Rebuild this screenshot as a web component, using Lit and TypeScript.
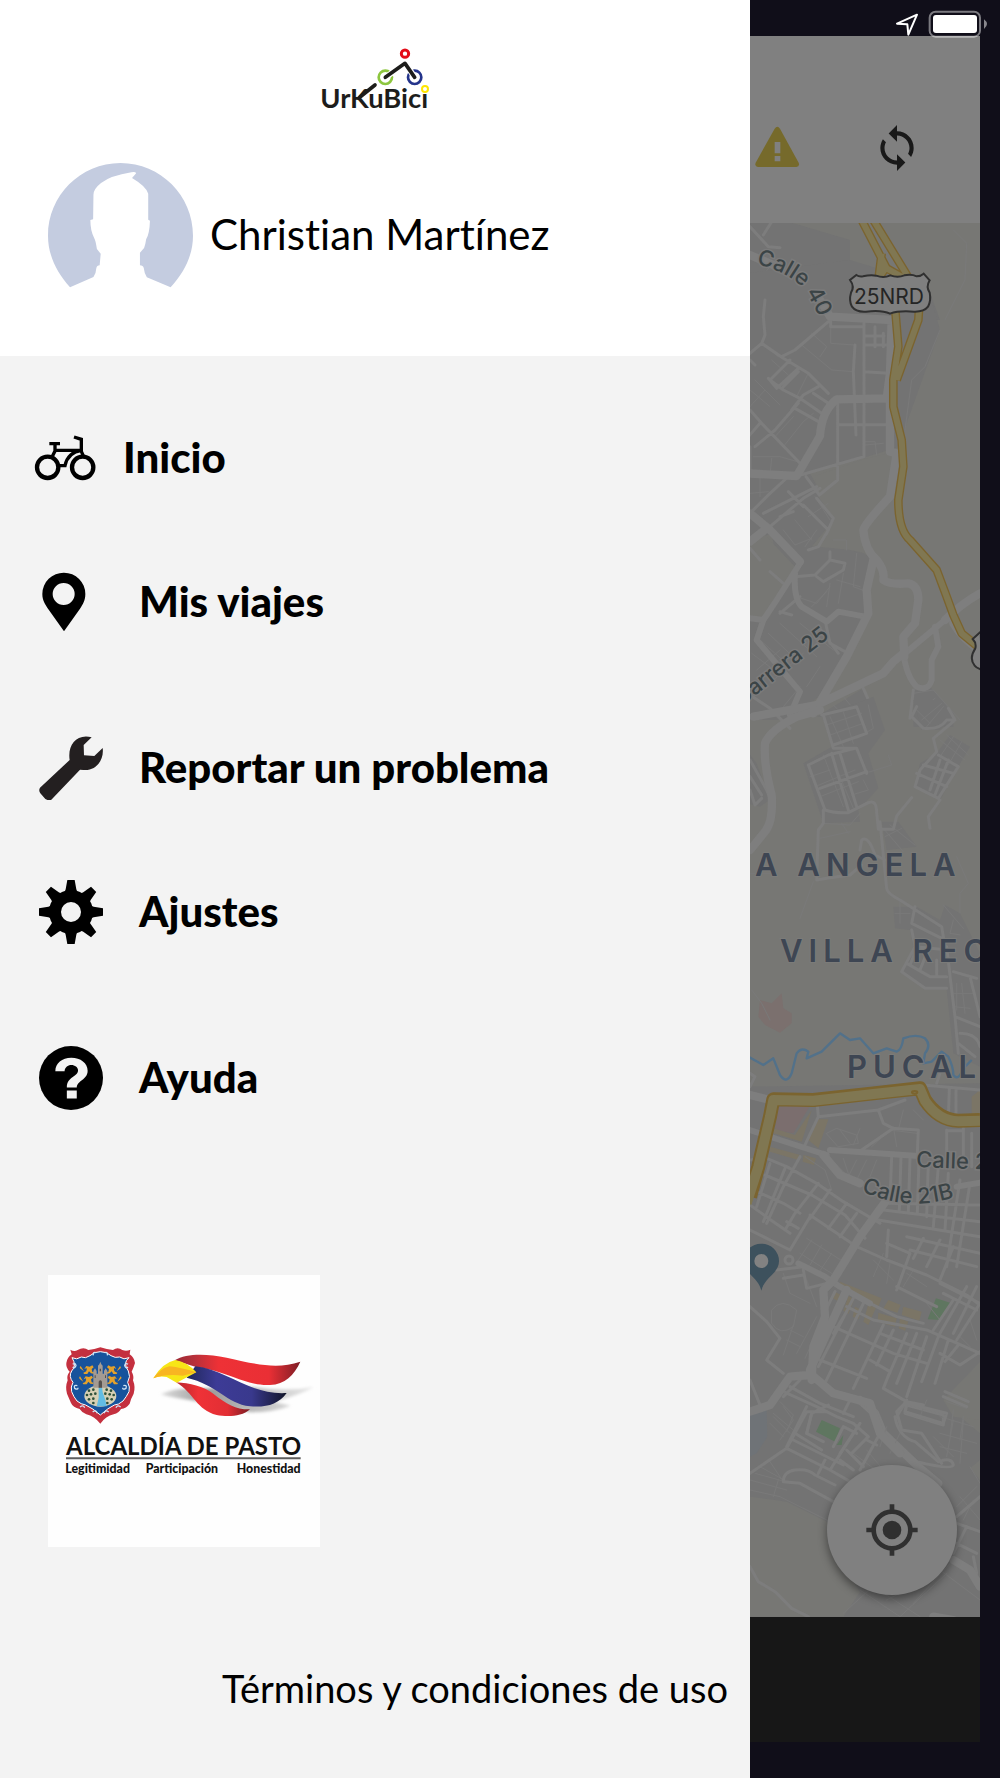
import { LitElement, html, css, svg } from "lit";
import { customElement } from "lit/decorators.js";

/* ---------- Street map: each sheet is drawn on a 3x grid ---------- */

const sheet = (y: number, content: unknown) =>
  svg`<g transform="translate(740 ${y}) scale(.33333)">${content}</g>`;

const north = svg`
  <path class="built" d="M30 640H60L330 720 330 830 560 850 600 960H0z"/>
  <path class="r1" d="M640 690l40 40-5 110-60 120M90 800l-60 70M150 885l60 50M180 850l-30 35"/>
  <path class="r2" d="M30 680l55 60 35 3M95 665L70 705M30 885h30l45 15 40-60-65-15M105 900l-40 45v20"/>
  <path class="r4" d="M30 765l70 30 110 85 55 80"/>
`;

const heights = svg`
  <path class="built" d="M20-80L330-120 560-50 600 90 500 370 480 440 380 470 210 520 285 655 215 740 300 720 390 770 390 950 320 1060 235 1190 150 1260H20V950L80 955 125 870 95 700 20 730z"/>
  <path class="land" d="M30 740L75 705 165 800 115 900 90 950 30 945z"/>
  <path class="land" d="M225 528L372 478 460 455 440 600 370 680 375 760 330 750 235 740 280 655 235 590z"/>
  <path class="built" d="M230 1250L370 1165 420 1260z M520 1170L570 1160 640 1240V1280H520z"/>
  <g class="r1">
    <path d="M65 130l50 40M185 135l90 75 65 5M215 100l45 40-20 30M272 80v50l70 5M600 90l-45 110-40 40-20 150M30 270l60 50M45 240l75 75M30 320l45-50M95 180l50 45M205 220l-35 70M130 440l60-75 30-25M100 410l45 40M160 350l-55 60M375 425h30l5 40M430 430l-55 5M40 470h80l70 20M60 530v60M95 475l-5 50M30 580l55-5M190 615l75 75M205 650l60-40M225 590l45 70M130 690l35 45 50-20M165 660l50 60M230 690l-35 50M280 720h40v30M350 760l-10 100 40 15M310 820l-15 90M290 840l70 20M170 890l60 20 40-50M270 850l-10 70M215 920l45-45M35 1060l60 45M60 1020l90 80M85 1000l95 90M120 970l110 100M50 1110l70-60M90 1150l100-90M180 970l100 80M240 1100l-40 60M130 1220l50-60M520 1180l60-10 80 90M540 1230l45-35M280 1215l60 60M310 1190l50 60"/>
  </g>
  <g class="r2">
    <path d="M75 0l-5 50 5 55-10 25L30 160M65 130l65 45 75 45 60 60M125 170l40-20 100-85M30 180l15 15M90 240l60-60M110 265l65-60M130 260l45-45M90 240l40 30 50 25 65 45M155 330l35-45 45-25M165 325l80 45M220 280l45 30M60 365l120 125M30 330l35 40M45 440l60-50 70-80M30 440v80M60 370l-35 40M110 265l-25-30M272 45v35h100M372 60v410l-190 55M405 80v60M430 100v40M372 108h60M372 135h75M345 135l-5 80 8 190M372 215l75 5M295 374h155M293 290v250l-55 45-40-55M30 640l60-60 60-55M70 640l160-80M145 575l45 45M90 680l100-85 50-30M120 650l40-15M190 615l75 75-30 50-30 10M230 595l50 60-20 45M165 830l60-5 45-45 45 10-5 20-60 35-20-15M270 780v-25M30 745l30 35M90 815l40 35M120 940l60-50M155 945l-35-10M235 980l60 80M255 960l15 70 45 25M30 1185l60 40 60 60M370 1165l20 45-100 40M520 1170l-10 85"/>
  </g>
  <g class="r3">
    <path d="M30 955l40 5-20 60 75 90 55 65-30 70M180 790l-70 110-40 60M165 820q-5 75 20 100l75 45 35-30 80 15M495 1060l60-50 60-50M585 980l10 60-20 40v60q-10 35-45 20-30-30-40-100"/>
  </g>
  <g class="r4">
    <path d="M240 0l30 50 185 10-5 160-10 75-150 3q-45 35-50 110l-70 120-150-8M450 240v215l20 5-20 130q-75 80-80 100 5 60 40 90 25 30 20 60 20 15 75 10 30 5 30 50l-10 70-35 40 3 60M30 640l60 50 90 95M30 725l50-40M400 780l-20 90 5 70-65 130-100 170M490 1060l-30 25-30 35-200 95-190 35M615 960q50-50 105-80M640 970q30 50 80 80"/>
  </g>
`;

const suburbs = svg`
  <path class="built" d="M245 40L350 10 400 -10 435 90 385 160 415 265 355 330 360 365 250 370 190 190 275 140z M525 260L540 190 590 160 630 105 690 140 655 200 600 300z M425 365L475 365 530 440 440 450z M460 620L530 620 600 660 615 615 660 640 720 760V1100L640 1060 620 870H555L485 820 520 740 510 690 465 685z M520 0H580L640 50 600 90H545z"/>
  <path class="built" d="M20 150L50 190 90 300 60 320 20 310z M20 1160L720 1150V1260H20z"/>
  <path class="hill" d="M60 900L95 910 125 880 130 925 155 940 155 970 120 998 75 975 55 950z"/>
  <g class="r1">
    <path d="M270 50l40 90M310 35l30 95M260 75l105-35M270 105l100-35M385 15l15 70-50 30M210 230l60-20M225 260l120-50M240 290l115-45M250 165l60 155M270 160l70 165M375 220l80-25-10-30M370 240l15 30-50 15M250 340v30l80 5 30-35M305 370l20 30M240 415l90-20M430 385l60 70M450 375l75 60M435 410l50-25M30 520h80M220 545l-40 110M650 470l35 80-25 30v60M465 640h45M480 600v70M610 615l60 70M640 660l-10 40 30 5M35 870l30 40 25 50M600 120l75 60M620 105l65 60M640 110l-40 60M665 125l-40 70M545 60l60-50M560 80l50-60M530 30l40 40M650 850v80M665 850l10 90M640 880h60M640 920l50 5"/>
  </g>
  <g class="r2">
    <path d="M250 45l30 100 70 0 30 75M245 45l105-25 30 80-100 35M205 195l60-30 80-20M205 195l50 135q30 10 70 8l60-30q25-10 25 30l5 50h45l10-40 45-55M240 265l140-50M275 160l50 170M300 160l50 160M250 330v40l-15 20-5 150 30-5 70-10 35-30M360 450l5-30q20-15 40 45l30 15M420 365l20 200q0 15 40 35l55 35 70 45 10 60M525 620l-10 50 90 45M530 20l-15 30 35 35q50 5 70-25l25 0-20-35M640 65l-60 50 10 40-50 55-15 50 70 35 60-95-60-35M530 220l90 40M550 195l90 25M600 180l-30 90M625 180l-40 105M600 300l-35 50 5 35M515 690l10 50-40 75 70 50h65M525 740l100 10M620 740l15 130 10 80 10 110M500 790l70 40h50M530 745l-20 50M560 760l-20 50M590 780v50M640 815l70 20M690 830l30 120M645 950l75 30M660 1000q50 0 60 40M655 1030l50 40M600 1120l-10 30M30 180l50 90 20 50M30 230l35 55M30 270l15 45 20-20M30 1120l15 10-15 30"/>
  </g>
  <path class="r4" d="M240 30l-70 20q-80 40-95 80-5 60 20 155 5 80-20 110L30 450"/>
  <path class="river" d="M25 1070l45 25 30-20 20 50q20 30 35-5l15-60q15-20 35-5l-5 20 45-20 55-55 30 20 30-5 40 45 40-15 30 10q15-5 20-40 40-15 65 0 20 20 0 45l-5 30 25-5 30-30 20 15q15 30 15 55 15 20 30-20l25-25"/>
`;

const centre = svg`
  <path class="land" d="M720 965L610 1080 640 1130 720 1140z"/>
  <path class="mall" d="M115 200L215 190 160 280 105 270z"/>
  <path class="shops" d="M215 210L185 305 100 280 100 265 165 285z M235 238H265L235 325 205 300z M90 320L180 345 175 360 90 335z M190 345L228 355 222 375 188 365z M300 725L425 775 415 800 300 740z M430 805L445 780 482 795 472 818z M490 800L545 815 538 842 485 825z M415 818L470 835 465 860 413 845z M325 768L343 778 325 822 310 812z M385 793L408 803 385 855 370 845z M285 755L302 765 292 782 278 775z M345 800L365 810 355 838 338 830z M480 835L505 845 495 872 476 865z M695 170L720 150V250L695 235z"/>
  <path class="park" d="M588 775L635 790 600 840 563 838z M245 1140L300 1165 285 1205 228 1175z M310 1185L290 1215H305z"/>
  <path class="water" d="M30 1125L80 1110 82 1190 50 1240 30 1250z"/>
  <g class="r1">
    <path d="M260 280l30-15 60 20 5 25-60 10zM300 270l30 40M360 265l-20 50M395 320l55-50 80 10M460 260l10 60M490 210l-15 60M520 210l30 30M285 370l40 40M310 355l20 60M350 360l-30 60M380 360l-30 60M410 360l-20 50M195 350l60 40 20 60M200 595l110 70M180 640l95 60M215 600l-40 60M245 615l-35 60M275 640l-40 60M400 660l60 60M430 640l-30 70M450 670l-10 60M500 700l60 40M520 690l-30 50M560 790l40 50M95 810q30-40 75 0l-10 50q-40 30-65-10zM130 700l20 60 60 30M200 720l30 80M150 870l40 20M140 900l40 20M170 940l60-110M195 955l55-120M160 855l-30 90M620 1085l60 20M600 1130l100 30M640 1110l-10 80M670 1130l-10 70M580 1190l60 60M120 1085l40 40-20 50M100 1120l60 50M90 1150l40 40M690 840l20 60M660 890l30 30M560 1080l-20 50M440 1160l-20 60M480 1180l-30 60"/>
  </g>
  <g class="r2">
    <path d="M230 170l5 60-45 95M235 230l180-20 80-30M415 210l15 40 30 15-95 65M455 265l80 5-3 70M550 135l170 15M628 145l-3 90M648 145v90M620 270v60M670 265v80M620 272h50M695 280v100M455 350l-5 130M483 350l-5 160M510 355l-5 160M537 360l-5 160M565 370l-5 160M595 380l-15 180M625 400l-10 170M660 420l-40 260M690 430l-40 250M440 490l280 5M430 510l290 35M415 540l305 50M445 570l-5 80M500 590l220 50M510 630l200 50M440 610l70 30-40 110M550 595l-30 60M600 600l-40 80M640 620l-40 100"/>
    <path d="M80 355l60 25 90 50 80 55 110 65M75 405l140 60 100 60 60 70M40 450l90 40 50 30M30 495l70 50 50 35M90 370l-40 130M135 385l-65 160M180 350l-50 90-50 110M235 430l-70 90-30 50M270 450l-60 85M320 490l-55 75M350 520l-50 70M210 525l140 95 90 40 120 45 120 60 40 30M150 630l60-100M140 545l35 20M30 570l120 60M30 360l50-5M110 690l80-10 60 30M130 715l60-10M190 690l10 55 60-15M30 800l50 45 40 50-40 65 50 40M260 805l25-50M345 765l-110 215M375 780l-125 260M320 815l-40 65M390 790l80 40 80 20M320 800l80 40 160 30M280 860l180 80 100 30M430 855l-90 190M460 870l-50 105M500 880l-60 140M530 880l-60 150M560 890l-60 180M595 890l-50 135M625 900l-40 130M655 915l-40 50M420 880l130 50M600 940l60 35 60-40M560 870l160 70M470 740l120 60M600 730l120 60M610 760l100 50M640 780l-60 90M680 740l-80 140M710 740l-70 140M720 790l-70 110M240 960l140 55M390 960l60 35-20 50 70 40 50 10M500 1090l120 30-10 30-115-35zM500 1085l-30 30 15 55 60 10 60 90M615 1055l70 30M610 1070l70 30M30 1020l30 75M130 1055l100 45 60 30 50 20 45 40M150 1040l90 50 100 40M200 1100l-60 120M215 1120l-15 60 50 25M360 1150l-60 90M385 1190l-50 50M330 1080l-20 40M165 1180l80 50M280 1220l30-60 40 20M180 1020l-50 50"/>
    <circle cx="147" cy="660" r="12"/>
  </g>
  <g class="r3">
    <path d="M270 330l265 18M30 270l90 30 140 45M175 670l80 40 45 30 90 50M650 440l70-12"/>
  </g>
  <g class="r4">
    <path d="M30 165l60 15M250 345l50 60 60 25M440 480l-80 110-80 130-30 30 5 80-35 90-5 100M320 750l-110 240M30 1115l60-20 60-85 60-5M210 1000l70 60 110 30 30 90 60 60"/>
  </g>
  <path class="edge" stroke-width="42" d="M30 470l25-90 35-150 10-52 120 2 180-20 140-15 15 35q40 60 100 62l65-2"/>
  <path class="gold" stroke-width="30" d="M20 490l35-110 35-150 10-50 120 2 180-20 140-15 15 35q40 60 100 62l65-2"/>
  <ellipse class="edge" cx="524" cy="157" rx="8" ry="4" stroke-width="6"/>
`;

const south = svg`
  <path class="land" d="M30 290L140 305 270 370 300 480 360 575 310 650H30z M620 20L720 -20V100L660 50z M690 205L720 180V240z"/>
  <g class="r1">
    <path d="M30 240l110 30M45 220l110 30M100 290l15-50M30 270l90 20 150 75M60 200l90 50M90 185l40 60M640 60l-20 110M670 60l-10 130M600 100l110 30M600 140l80 20M690 200l30 50M660 290l60 70M650 320l60-60M700 300l-30 60M360 570l120 80M400 560l140 90M310 640l110-100M480 650l140-130M600 510l120 90M640 480l-120 130M440 600l100-50M130 20l30 40-40 60M100 50l50 50M340 160l80 60M380 150l50 60"/>
  </g>
  <g class="r2">
    <path d="M30 220l110-75 60-110 60 0M140 145l130 65 70 40M160 120l150 75M200 100l15-60 50-25M235 220l20-40M130 245q0-30 35-35 40-5 60 15l60 30M130 245l50 5 100 55M270 210l35-55 45-70M300 180l40 30M320 150l50 50M360 210l60-110M380 120l30 15M465 50q10 60 60 75l70 60q40-15 45 10-5 15-110-10M500 0l-30 50M495 40l115 35 0-30-110-30zM30 500l25 45 50 30 50 50 50 25M650 370l70 25M680 380l-40 80M650 430l60 30M700 470l10 50M650 350l70-60"/>
  </g>
  <path class="r4" d="M360 0l45 40 25 60 105 100 60 50M640 480l50 30 30 50M580 650l60 10"/>
`;

const cityMap = svg`
  <svg class="canvas" viewBox="750 223 230 1394" preserveAspectRatio="xMinYMin slice" role="img" aria-label="Mapa">
    <rect class="ground" x="700" y="200" width="1500" height="1500"/>
    <rect class="blocks" x="740" y="1100" width="1500" height="520"/>
    ${sheet(0, north)} ${sheet(300, heights)} ${sheet(700, suburbs)} ${sheet(1400, south)} ${sheet(1040, centre)}
    ${sheet(300, svg`
      <path class="edge" stroke-width="26" d="M365-240L440-95 520-50M400-240L510-60 540-20 535 60 470 240M440-100L385-20M425-140L415-60 350-20M465 20L475 140 460 240 460 320 485 420 490 500 475 600Q475 690 510 720L590 810 620 890 640 945 665 1000 720 1045"/>
      <path class="gold" stroke-width="18" d="M365-240L440-95 520-50M400-240L510-60 540-20 535 60 470 240M440-100L385-20M425-140L415-60 350-20M465 20L475 140 460 240 460 320 485 420 490 500 475 600Q475 690 510 720L590 810 620 890 640 945 665 1000 720 1045"/>
      <path class="shield" transform="translate(0 98)" d="M349-173q8 6 20 4 22-5 40-2 22 8 42-1 22 8 42 0 22-4 37 3 12 0 21-8l18 20q-12 20 0 37 5 24-5 42-12 16-42 15-45-4-72 6-25-12-72-6-30 2-42-15-10-18-3-42 12-18-3-38z"/>
      <path class="shield" d="M722 995l-24 22q12 12 8 28-20 30-2 52 6 8 22 12z"/>
    `)}
    <path id="calle40" fill="none" d="M756 264Q786 271 803 288 812 300 822 324"/>
    <path id="calle21b" fill="none" d="M861 1191Q894 1206 928 1203 950 1200 975 1191"/>
    <text class="street"><textPath href="#calle40">Calle 40</textPath></text>
    <text class="street"><textPath href="#calle21b">Calle 21B</textPath></text>
    <text class="street" transform="translate(916 1167) rotate(2)">Calle 2</text>
    <text class="street" text-anchor="end" transform="translate(830 637) rotate(-38)">Carrera 25</text>
    <text class="route" x="889" y="304" text-anchor="middle">25NRD</text>
    <text class="district" x="755" y="876">A ANGELA</text>
    <text class="district" x="780" y="962">VILLA REC</text>
    <text class="district" x="847" y="1078">PUCAL</text>
    ${sheet(1040, svg`
      <path fill="#3d515d" d="M64 611a52 52 0 0 1 53 53c0 36-44 48-53 88-9-40-53-52-53-88a52 52 0 0 1 53-53z"/>
      <circle cx="64" cy="663" r="21" fill="#828282"/>
    `)}
  </svg>`;

/* ---------- Logos ---------- */

const brandLogo = svg`
  <svg class="brand" viewBox="0 0 330 204" role="img" aria-label="UrKuBici">
    <g fill="none" stroke-linecap="round" stroke-linejoin="round">
      <circle cx="255" cy="38" r="11" stroke="#e30c18" stroke-width="9"/>
      <circle cx="196" cy="109" r="20" stroke="#8dc63f" stroke-width="8"/>
      <circle cx="284" cy="109" r="20" stroke="#24348b" stroke-width="8"/>
      <path stroke="#fff" stroke-width="18" d="M205 103l50-36 24 34"/>
      <path stroke="#1d1d1b" stroke-width="11" d="M196 109l59-42 29 42M120 168l45-36"/>
    </g>
    <text class="brand-name" x="1" y="201">UrKuBici</text>
    <circle cx="315" cy="144" r="9" fill="#fff" stroke="#ffe600" stroke-width="6"/>
  </svg>`;

const lion = svg`<path d="M0 22q12-2 10-14l-7 3 6-9 10 2 8-4 4 6-6 5 2 9 6 1-2 4-8-1-6-6-5 8H2zM-8 2q-6 6 2 10l8 6" fill="#e3a12c"/>`;

const cityLogo = svg`
  <svg class="city" viewBox="24 44 816 816" role="img" aria-label="Alcaldía de Pasto">
    <defs>
      <linearGradient id="wing-top"><stop offset="0" stop-color="#9c2a33"/><stop offset=".15" stop-color="#b5303a"/><stop offset=".35" stop-color="#ee3136"/><stop offset=".75" stop-color="#ea2f35"/><stop offset="1" stop-color="#7e1d25"/></linearGradient>
      <linearGradient id="wing-mid"><stop offset="0" stop-color="#20285c"/><stop offset=".3" stop-color="#3d3b96"/><stop offset=".65" stop-color="#39398d"/><stop offset="1" stop-color="#101427"/></linearGradient>
      <linearGradient id="wing-low"><stop offset="0" stop-color="#b8262d"/><stop offset=".3" stop-color="#ef3237"/><stop offset=".7" stop-color="#e22e34"/><stop offset="1" stop-color="#7a1b22"/></linearGradient>
      <linearGradient id="shade"><stop offset="0" stop-color="#ddd"/><stop offset=".3" stop-color="#999"/><stop offset="1" stop-color="#e8e8e8"/></linearGradient>
      <filter id="soft"><feGaussianBlur stdDeviation="4"/></filter>
    </defs>
    <g stroke-linejoin="round">
      <path fill="#c4303f" d="M91 268q12 8 22 1 18-10 32 0 18-1 36-8 20 6 38 8 14-10 28 0 12 5 24-1l-2 14q14 10 16 26-4 14-10 26 8 14 4 26 8 20 2 40-8 14-12 30-10 14-26 16-6 12-22 16-24 6-40 28-18-22-42-28-14-6-20-16-20-4-26-18-6-14-12-28-6-20 2-40-4-14 6-26-12-12-10-26 2-16 16-26z"/>
      <path fill="#17539c" stroke="#fff" stroke-width="3" d="M96 292q14 8 28-2 12 6 26-4 12-12 31-12 20 0 32 12 12 8 26 4 12 10 28 2-20 16-2 40 8 16-2 34 8 14 4 28-8 16-18 28-14 12-26 12-18 8-42 30-22-20-44-30-14-2-26-12-10-12-16-28-4-14 4-28-14-18-4-34 16-16 1-40z"/>
      <g fill="none" stroke="#cfe3f5" stroke-width="4">
        <path d="M160 285q-2-12 8-8M202 285q2-12-8-8M98 312q8-6 10 4-3 10-10 4M264 312q-8-6-10 4 3 10 10 4M112 376q-12-4-8 8 10 6 10-2M250 376q12-4 8 8-10 6-10-2M120 440q10-8 14 2M242 440q-10-8-14 2M158 455q10-8 14 4M206 455q-10-8-14 4"/>
      </g>
      <g transform="translate(130 315)">${lion}</g>
      <g transform="translate(128 346)">${lion}</g>
      <g transform="translate(232 315) scale(-1 1)">${lion}</g>
      <g transform="translate(234 346) scale(-1 1)">${lion}</g>
      <ellipse cx="181" cy="407" rx="48" ry="32" fill="#d6d0b4"/>
      <g fill="#2c5039">
        <circle cx="147" cy="391" r="4"/><circle cx="160" cy="388" r="4"/><circle cx="141" cy="404" r="4"/><circle cx="153" cy="402" r="4"/><circle cx="166" cy="400" r="4"/><circle cx="147" cy="417" r="4"/><circle cx="160" cy="415" r="4"/><circle cx="160" cy="428" r="4"/>
        <circle cx="200" cy="388" r="4"/><circle cx="213" cy="391" r="4"/><circle cx="196" cy="400" r="4"/><circle cx="209" cy="402" r="4"/><circle cx="221" cy="404" r="4"/><circle cx="202" cy="415" r="4"/><circle cx="215" cy="417" r="4"/><circle cx="202" cy="428" r="4"/>
      </g>
      <path fill="#62bde4" d="M176 378h10l2 18 8 22 4 20H170l6-26z"/>
      <path fill="#a39b93" d="M160 382v-50l5-8 5 8v8h4v-24l4-4 3-8 3 8 4 4v24h4v-8l5-8 5 8v50z"/>
      <path fill="#55504e" d="M176 382v-18q5-8 10 0v18zM164 345h3v8h-3zM195 345h3v8h-3zM179 325h4v8h-4z"/>
    </g>
    <path filter="url(#soft)" fill="url(#shade)" d="M362 402Q400 385 440 386L640 380Q740 395 822 380 770 408 700 424L752 436Q700 456 630 456L480 424Q400 414 362 402z"/>
    <path fill="url(#wing-top)" d="M404 300C440 278 500 280 560 292 650 312 710 328 781 304 762 345 735 372 690 374 620 378 570 335 468 320z"/>
    <path fill="url(#wing-mid)" d="M466 318C560 328 630 405 740 398 715 432 680 442 630 438 560 430 530 372 440 352z"/>
    <path fill="url(#wing-low)" d="M408 366C450 368 490 378 520 400 560 432 590 448 630 447 605 470 560 470 530 464 470 450 462 398 408 366z"/>
    <path fill="#f7e617" d="M340 354Q366 308 406 299 440 304 469 336L410 367 380 350Q354 346 340 354z"/>
    <path fill="#f8b522" d="M340 354Q360 325 388 318 425 322 469 336L428 346Q380 340 340 354z"/>
    <text class="city-name" x="78" y="585">ALCALDÍA DE PASTO</text>
    <path fill="#5d5d5d" d="M78 591h704v6H78z"/>
    <text class="motto" x="76" y="638">Legitimidad</text>
    <text class="motto" x="317" y="638">Participación</text>
    <text class="motto" x="782" y="638" text-anchor="end">Honestidad</text>
  </svg>`;

const avatar = svg`
  <svg class="avatar" viewBox="0 0 145 145" role="img" aria-label="Foto de perfil">
    <g transform="scale(.3444 .3333) translate(-53 -38)">
      <path fill="#c4cce0" d="M117 411C78 366 53 314 53 256 53 136 147 38 263.500 38S474 136 474 256C474 314 449 366 409 411L340 381q-7-10-9-28-2-8-11-8V307l12-14q4-10 6-26 10-18 11-56l-5-3V130q-6-22-47-47l12-14q-2-6-14-3-60 10-88 32-22 18-22 35l-1 74-8 2q0 32 11 54 4 6 8 33l11 14-3 35q-8 0-10 10 0 12-8 25z"/>
    </g>
  </svg>`;

/* ---------- Menu icons ---------- */

const bike = svg`
  <svg class="icon wide" viewBox="40 75 190 144" aria-hidden="true">
    <g fill="none" stroke="#000">
      <circle cx="83" cy="175" r="32" stroke-width="13"/>
      <circle cx="188" cy="175" r="32" stroke-width="13"/>
      <path stroke-width="10" d="M88 104h32M105 104v22l-9 18M104 124h82M162 84l22 7v36l8 18M118 170h17q8-40 50-46"/>
    </g>
  </svg>`;

const pin = svg`
  <svg class="icon pin" viewBox="67 487 132 178" aria-hidden="true">
    <path fill-rule="evenodd" d="M133 488a64 64 0 0 1 64 64c0 20-8 32-16 44l-48 68-48-68c-8-12-17-24-17-44a64 64 0 0 1 65-64zm-1 31a33 33 0 1 0 0 66 33 33 0 0 0 0-66z"/>
  </svg>`;

const wrench = svg`
  <svg class="icon" viewBox="0 0 192 192" aria-hidden="true">
    <path fill="#231f20" d="M158 4l-24 23 1 31 31 2 25-24c5 38-22 70-58 66l-10-1-86 90q-9 4-18-2L4 172q-6-9-1-17L92 72C85 28 112-8 158 4z"/>
  </svg>`;

const toothAngles = [0, 45, 90, 135, 180, 225, 270, 315];
const gear = svg`
  <svg class="icon" viewBox="-96 -96 192 192" aria-hidden="true">
    <path fill-rule="evenodd" d="M0-66A66 66 0 1 1 0 66 66 66 0 1 1 0-66zM0-30A30 30 0 1 0 0 30 30 30 0 1 0 0-30z"/>
    ${toothAngles.map((a) => svg`<path transform="rotate(${a})" d="M-22-58q5-4 6-10l5-28h22l5 28q1 6 6 10z"/>`)}
  </svg>`;

const help = svg`
  <svg class="icon" viewBox="2 2 20 20" aria-hidden="true">
    <circle cx="12" cy="12" r="10"/>
    <path fill="#f3f3f3" d="M7.100 9.900C7.100 7.400 9.200 5.700 12.100 5.700S17.200 7.400 17.200 9.700C17.200 12.600 13.800 12.700 13.800 15H10.700C10.700 11.500 14.200 11.700 14.200 9.600 14.200 8.600 13.200 7.900 12.100 7.900S10 8.700 10 9.900zM10.700 15.900h3.100v2.500h-3.100z"/>
  </svg>`;

interface Entry { label: string; icon: unknown; tight?: boolean }

const menu: Entry[][] = [
  [{ label: "Inicio", icon: bike, tight: true }, { label: "Mis viajes", icon: pin }],
  [{ label: "Reportar un problema", icon: wrench }, { label: "Ajustes", icon: gear }],
  [{ label: "Ayuda", icon: help }],
];

@customElement("side-drawer")
class SideDrawer extends LitElement {
  static styles = css`
    :host { display: flex; flex-direction: column; background: #f3f3f3; color: #000; font-family: Lato, "Open Sans", sans-serif; font-variant-ligatures: none; }
    .head { background: #fff; min-height: 356px; box-sizing: border-box; padding-top: 41px; }
    .brand { display: block; width: 110px; height: 68px; margin: 0 auto; overflow: visible; }
    .brand-name { font: 700 82px Lato, sans-serif; fill: #1d1d1b; }
    .user { display: flex; align-items: center; gap: 17px; padding: 54px 0 0 48px; }
    .avatar { width: 145px; height: 145px; flex: none; }
    .user-name { margin: 0; padding-bottom: 4px; font-size: 42px; line-height: 50px; font-weight: 400; }
    nav { display: flex; flex-direction: column; gap: 22px; padding: 30px 0 0 33px; }
    ul { list-style: none; margin: 0; padding: 0; }
    .entry { display: flex; align-items: center; gap: 36px; height: 144px; color: inherit; text-decoration: none; font-size: 42px; line-height: 48px; font-weight: 900; }
    .entry.tight { gap: 26px; }
    .entry span { padding-bottom: 2px; }
    .icon { width: 64px; height: 64px; flex: none; margin-left: 6px; }
    .icon.wide { height: 48px; margin-left: 0; }
    .icon.pin { width: 44px; height: 60px; margin: 0 17px 0 9px; }
    .city { display: block; width: 272px; height: 272px; margin: 125px 0 0 48px; background: #fefefe; }
    .city-name { font: 700 72px Lato, sans-serif; fill: #111; }
    .motto { font: 900 37px Lato, sans-serif; fill: #111; }
    .terms { margin: auto 22px 66px auto; color: inherit; text-decoration: none; font-size: 38px; line-height: 48px; }
  `;

  render() {
    return html`
      <header class="head">
        ${brandLogo}
        <div class="user">${avatar}<p class="user-name">Christian Martínez</p></div>
      </header>
      <nav>
        ${menu.map((group) => html`<ul>
          ${group.map((e) => html`<li><a class="entry ${e.tight ? "tight" : ""}" href="#">${e.icon}<span>${e.label}</span></a></li>`)}
        </ul>`)}
      </nav>
      ${cityLogo}
      <a class="terms" href="#">Términos y condiciones de uso</a>
    `;
  }
}

@customElement("map-screen")
class MapScreen extends LitElement {
  static styles = css`
    :host { display: flex; flex-direction: column; }
    button { border: 0; padding: 0; background: none; display: flex; }
    .bar { display: flex; align-items: center; gap: 71px; box-sizing: border-box; height: 187px; padding: 37px 0 0 3px; background: #808080; }
    .warn { width: 48px; height: 48px; }
    .sync { width: 50px; height: 50px; }
    .map { position: relative; flex: 1; overflow: hidden; }
    .canvas { position: absolute; inset: 0; width: 100%; height: 100%; }
    .ground, .land { fill: #777774; }
    .blocks, .built { fill: #737373; }
    .r1, .r2, .r3, .r4 { fill: none; stroke: #7e7e7e; stroke-linejoin: round; stroke-linecap: round; }
    .r1 { stroke: #797979; stroke-width: 3; }
    .r2 { stroke: #7d7d7d; stroke-width: 9; }
    .r3 { stroke-width: 18; }
    .r4 { stroke-width: 25; }
    .edge { fill: none; stroke: #7b642f; stroke-linejoin: round; }
    .gold { fill: none; stroke: #807752; stroke-linejoin: round; }
    .river { fill: none; stroke: #52718a; stroke-width: 7; stroke-linejoin: round; }
    .hill { fill: #7b706e; }
    .mall { fill: #7b6e6e; }
    .shops { fill: #7b7566; }
    .park { fill: #5f7660; }
    .water { fill: #6f7377; }
    .shield { fill: #7f7f7f; stroke: #303030; stroke-width: 6; }
    .street { font: 500 22px Inter, sans-serif; fill: #3b4446; paint-order: stroke; stroke: #7b7b7b; stroke-width: 3px; }
    .route { font: 400 21px Inter, sans-serif; fill: #252525; }
    .district { font: 600 31px Inter, sans-serif; letter-spacing: 6px; fill: #3e4653; paint-order: stroke; stroke: #7b7b79; stroke-width: 2px; }
    .locate { position: absolute; right: 23px; bottom: 22px; width: 130px; height: 130px; border-radius: 50%; background: #808080; box-shadow: 0 4px 10px rgba(0, 0, 0, .45); align-items: center; justify-content: center; }
    .target { width: 52px; height: 52px; }
    .foot { height: 125px; background: #171717; }
  `;

  render() {
    return html`
      <div class="bar">
        <button aria-label="Alertas">
          <svg class="warn" viewBox="0 0 144 144"><path fill="#766a2b" d="M65 14q8-12 16 0l56 102q4 11-7 13H15q-11-2-7-13z"/><path fill="#808080" d="M65 54h17v34H65zM65 96h17v16H65z"/></svg>
        </button>
        <button aria-label="Actualizar">
          <svg class="sync" viewBox="0 0 24 24"><path fill="#191919" d="M12 4V1L8 5l4 4V6c3.310 0 6 2.690 6 6 0 1.010-.250 1.970-.700 2.800l1.460 1.460C19.540 15.030 20 13.570 20 12c0-4.420-3.580-8-8-8zm0 14c-3.310 0-6-2.690-6-6 0-1.010.250-1.970.700-2.800L5.240 7.740C4.460 8.970 4 10.430 4 12c0 4.420 3.580 8 8 8v3l4-4-4-4v3z"/></svg>
        </button>
      </div>
      <div class="map">
        ${cityMap}
        <button class="locate" aria-label="Mi ubicación">
          <svg class="target" viewBox="-78 -78 156 156"><circle r="28" fill="#303030"/><circle r="55" fill="none" stroke="#303030" stroke-width="14"/><path fill="none" stroke="#303030" stroke-width="14" d="M0-77v20M0 57v20M-77 0h20M57 0h20"/></svg>
        </button>
      </div>
      <div class="foot"></div>
    `;
  }
}

@customElement("app-root")
class AppRoot extends LitElement {
  static styles = css`
    :host { display: block; }
    .shell { display: grid; grid-template-columns: 3fr 1fr; min-height: 100vh; background: #100e19; }
    .rest { display: flex; flex-direction: column; min-width: 0; padding: 0 20px 36px 0; }
    .status { display: flex; justify-content: flex-end; height: 36px; margin-right: -20px; z-index: 1; }
    .signals { width: 104px; height: 40px; flex: none; }
    map-screen { flex: 1; }
  `;

  render() {
    return html`
      <div class="shell">
        <side-drawer></side-drawer>
        <div class="rest">
          <div class="status">
            <svg class="signals" viewBox="468 0 312 120" role="img" aria-label="Ubicación activa, batería llena">
              <path d="M471 71l60-27-26 60-3-31z" fill="none" stroke="#fff" stroke-width="6" stroke-linejoin="round"/>
              <rect x="569" y="35" width="151" height="75" rx="18" fill="none" stroke="#fff" stroke-opacity=".45" stroke-width="6"/>
              <rect x="579" y="45" width="132" height="54" rx="9" fill="#fff"/>
              <path d="M732 58q18 14 0 29z" fill="#fff" fill-opacity=".5"/>
            </svg>
          </div>
          <map-screen></map-screen>
        </div>
      </div>
    `;
  }
}
